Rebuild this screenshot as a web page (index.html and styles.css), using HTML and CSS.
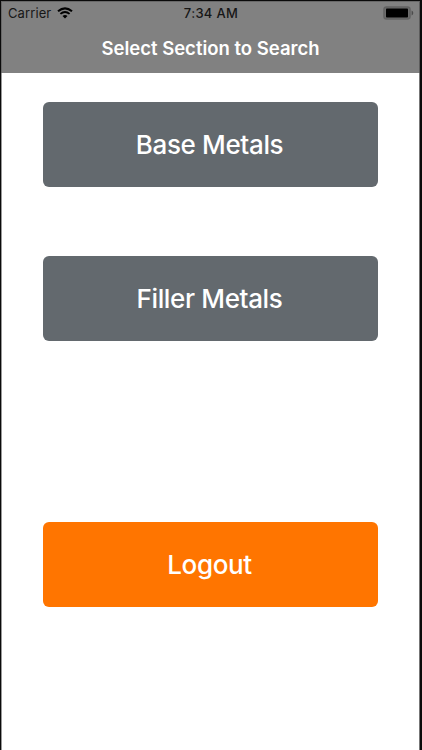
FILE: index.html
```
<!DOCTYPE html>
<html lang="en">
<head>
<meta charset="utf-8">
<title>Select Section to Search</title>
<link rel="stylesheet" href="styles.css">
</head>
<body>
<div class="screen">
  <header class="header">
    <div class="status">
      <div class="carrier">
        <span>Carrier</span>
        <svg class="wifi" width="16" height="12" viewBox="0 0 16 12" fill="none" stroke="#000">
          <path d="M1 4.3 Q8 -1.7 15 4.3" stroke-width="2.1"/>
          <path d="M3.4 6.9 Q8 3 12.6 6.9" stroke-width="1.9"/>
          <path d="M8 11.4 L5.5 8.9 Q8 6.9 10.5 8.9 Z" fill="#000" stroke="none"/>
        </svg>
      </div>
      <span class="time">7:34 AM</span>
      <svg class="battery" width="31" height="14" viewBox="0 0 31 14">
        <rect x="1" y="1" width="26" height="12" rx="2.5" fill="#6c6c6c" stroke="#626262" stroke-width="1.5"/>
        <rect x="3" y="2.5" width="22" height="9" rx=".8" fill="#000"/>
        <path d="M28.6 4.6 Q30.3 5.2 30.3 7 Q30.3 8.8 28.6 9.4 Z" fill="#4c4c4c"/>
      </svg>
    </div>
    <h1 class="title">Select Section to Search</h1>
  </header>
  <main class="actions">
    <button class="btn base">Base Metals</button>
    <button class="btn filler">Filler Metals</button>
    <button class="btn logout">Logout</button>
  </main>
</div>
</body>
</html>
```
FILE: styles.css
```
* { box-sizing: border-box; }
body {
  margin: 0;
  background: #000;
  font-family: Inter, "Liberation Sans", sans-serif;
}
.screen {
  height: 750px;
  border: solid #0a0a0a;
  border-width: 1px 2px 0 1px;
  background: #fff;
  box-shadow: inset 1px 0 #999, inset -1px 0 #777;
}
.header {
  height: 72px;
  background: #818181;
  border-top: 1px solid #686868;
  border-left: 1px solid #686868;
  border-right: 1px solid #5c5c5c;
}
.status {
  display: grid;
  grid-template-columns: 1fr auto 1fr;
  align-items: center;
  height: 22px;
  padding: 0 5px 0 6px;
  color: #171717;
  font-size: 13px;
}
.carrier {
  display: flex;
  align-items: center;
  gap: 6px;
  letter-spacing: .1px;
}
.time {
  font-weight: 500;
  letter-spacing: .3px;
}
.battery { justify-self: end; }
.title {
  margin: 12px 0 0;
  color: #fff;
  font-size: 18.5px;
  line-height: 24px;
  font-weight: 600;
  text-align: center;
  letter-spacing: 0;
}
.actions {
  display: flex;
  flex-direction: column;
  align-items: center;
  padding: 29px 1px 0 0;
}
.btn {
  width: 335px;
  height: 84.5px;
  padding: 1px 1px 0 0;
  border: 0;
  border-radius: 6px;
  background: #63696e;
  color: #fff;
  font: 550 26px/84px Inter, "Liberation Sans", sans-serif;
  letter-spacing: -.35px;
}
.filler { margin-top: 69.5px; }
.logout {
  margin-top: 181.5px;
  background: #ff7500;
}
```
